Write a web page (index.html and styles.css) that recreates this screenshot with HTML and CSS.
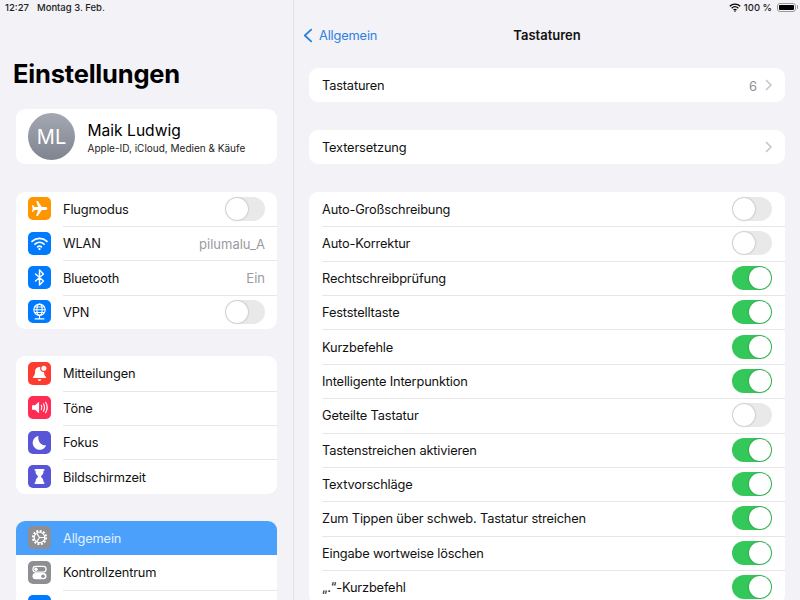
FILE: index.html
```html
<!DOCTYPE html>
<html lang="de">
<head>
<meta charset="utf-8">
<title>Tastaturen</title>
<link rel="stylesheet" href="styles.css">
</head>
<body>
<div class="app">
  <aside class="sidebar">
    <div class="status status-left"><span class="time">12:27</span><span>Montag 3. Feb.</span></div>
    <h1 class="title">Einstellungen</h1>
    <section class="card profile">
      <div class="avatar">ML</div>
      <div class="profile-text">
        <div class="profile-name">Maik Ludwig</div>
        <div class="profile-sub">Apple-ID, iCloud, Medien &amp; Käufe</div>
      </div>
    </section>
    <section class="card group">
      <div class="srow"><span class="ico orange"><svg viewBox="0 0 24 24"><path d="M21 12c0-1-1-1.700-2-1.700h-4.300L10 3.500H8.200l2.200 6.800H6.300L4.700 8.300H3.300l.9 3.700-.9 3.700h1.400l1.600-2h4.100l-2.200 6.800H10l4.700-6.800H19c1 0 2-.7 2-1.700z" fill="#fff"/></svg></span><span class="slabel">Flugmodus</span><span class="toggle"></span></div>
      <div class="srow"><span class="ico blue"><svg viewBox="0 0 24 24" fill="none" stroke="#fff" stroke-width="2" stroke-linecap="round"><path d="M3.500 9.500c4.800-4.400 12.200-4.400 17 0"/><path d="M6.800 12.800c3-2.700 7.400-2.700 10.400 0"/><path d="M9.800 15.800c1.300-1 3.100-1 4.400 0"/><circle cx="12" cy="18.400" r=".7" fill="#fff" stroke-width="1.200"/></svg></span><span class="slabel">WLAN</span><span class="value">pilumalu_A</span></div>
      <div class="srow"><span class="ico blue"><svg viewBox="0 0 24 24" fill="none" stroke="#fff" stroke-width="1.700" stroke-linejoin="round" stroke-linecap="round"><path d="M7.500 8l9 8-4.500 4.500v-17L16.500 8l-9 8"/></svg></span><span class="slabel">Bluetooth</span><span class="value">Ein</span></div>
      <div class="srow"><span class="ico blue"><svg viewBox="0 0 24 24" fill="none" stroke="#fff" stroke-width="1.300"><circle cx="12" cy="10" r="6.500"/><ellipse cx="12" cy="10" rx="3" ry="6.500"/><path d="M5.500 10h13M6.500 6.800h11M6.500 13.200h11M12 16.500v4M6.500 20.500h11"/></svg></span><span class="slabel">VPN</span><span class="toggle"></span></div>
    </section>
    <section class="card group">
      <div class="srow"><span class="ico red"><svg viewBox="0 0 24 24"><path d="M12 4.500c-3.500 0-5.200 2.600-5.200 6 0 3-1 4.300-2.300 5.500v1.200h15V16c-1.300-1.200-2.300-2.500-2.300-5.500 0-3.400-1.700-6-5.200-6z" fill="#fff"/><path d="M10 18.500h4a2 2 0 0 1-4 0z" fill="#fff"/><circle cx="17" cy="6" r="3.600" fill="#fff" stroke="#ff3b30" stroke-width="1.400"/></svg></span><span class="slabel">Mitteilungen</span></div>
      <div class="srow"><span class="ico pink"><svg viewBox="0 0 24 24"><path d="M3.500 9.500h3.300L11.500 5.500v13l-4.700-4H3.500z" fill="#fff"/><path d="M14 9.500c.9 1.500.9 3.500 0 5M16.500 7.800c1.500 2.600 1.500 5.800 0 8.400M19 6c2.200 3.700 2.200 8.300 0 12" fill="none" stroke="#fff" stroke-width="1.300" stroke-linecap="round"/></svg></span><span class="slabel">Töne</span></div>
      <div class="srow"><span class="ico indigo"><svg viewBox="0 0 24 24"><path d="M10.800 4.500a8 8 0 1 0 8.900 10.700c-5.300 1-10.200-4.400-8.900-10.700z" fill="#fff"/></svg></span><span class="slabel">Fokus</span></div>
      <div class="srow"><span class="ico indigo"><svg viewBox="0 0 24 24"><path d="M6.500 3.500h11v2h-1v1.500c0 2.500-2.500 3.700-2.900 5 .4 1.300 2.900 2.500 2.900 5v1.500h1v2h-11v-2h1V17c0-2.500 2.500-3.700 2.900-5-.4-1.300-2.900-2.500-2.900-5V5.500h-1z" fill="#fff"/></svg></span><span class="slabel">Bildschirmzeit</span></div>
    </section>
    <section class="card group">
      <div class="srow selected"><span class="ico gray"><svg viewBox="0 0 24 24" fill="none" stroke="#fff"><circle cx="12" cy="12" r="7.500" stroke-width="2.400" stroke-dasharray="2.300 1.630"/><circle cx="12" cy="12" r="6" stroke-width="1.300"/><path d="M12 12L8.800 7M12 12l-3.200 5M12 12h6" stroke-width="1.300"/></svg></span><span class="slabel">Allgemein</span></div>
      <div class="srow"><span class="ico gray"><svg viewBox="0 0 24 24"><rect x="4.500" y="5" width="15" height="6.500" rx="3.250" fill="none" stroke="#fff" stroke-width="1.400"/><circle cx="8" cy="8.250" r="1.900" fill="#fff"/><rect x="4" y="12.700" width="16" height="7" rx="3.500" fill="#fff"/><circle cx="16" cy="16.200" r="2" fill="#8e8e93"/></svg></span><span class="slabel">Kontrollzentrum</span></div>
      <div class="srow"><span class="ico blue"></span></div>
    </section>
  </aside>
  <main class="detail">
    <div class="status status-right">
      <svg class="wifi" viewBox="0 0 16 12" fill="none" stroke="#000" stroke-width="1.700"><path d="M1 4.300c4-3.600 10-3.600 14 0"/><path d="M3.500 6.900c2.600-2.300 6.400-2.300 9 0"/><path d="M6 9.300c1.200-.9 2.800-.9 4 0"/><circle cx="8" cy="10.800" r=".5" fill="#000" stroke-width="1"/></svg>
      <span>100 %</span>
      <span class="battery"><span class="battery-fill"></span></span>
    </div>
    <header class="nav">
      <div class="back"><svg class="back-icon" viewBox="0 0 11 16" fill="none" stroke="#2f7fdc" stroke-width="2" stroke-linecap="round" stroke-linejoin="round"><path d="M9 1.500L2 8l7 6.500"/></svg><span>Allgemein</span></div>
      <div class="nav-title">Tastaturen</div>
    </header>
    <section class="card dgroup first">
      <div class="drow"><span class="dlabel">Tastaturen</span><span class="dvalue">6</span><svg class="chev" viewBox="0 0 7 12" fill="none" stroke="#c4c4c7" stroke-width="1.500"><path d="M1 1l5 5-5 5"/></svg></div>
    </section>
    <section class="card dgroup">
      <div class="drow"><span class="dlabel">Textersetzung</span><svg class="chev" viewBox="0 0 7 12" fill="none" stroke="#c4c4c7" stroke-width="1.500"><path d="M1 1l5 5-5 5"/></svg></div>
    </section>
    <section class="card dgroup">
      <div class="drow"><span class="dlabel">Auto-Großschreibung</span><span class="toggle"></span></div>
      <div class="drow"><span class="dlabel">Auto-Korrektur</span><span class="toggle"></span></div>
      <div class="drow"><span class="dlabel">Rechtschreibprüfung</span><span class="toggle on"></span></div>
      <div class="drow"><span class="dlabel">Feststelltaste</span><span class="toggle on"></span></div>
      <div class="drow"><span class="dlabel">Kurzbefehle</span><span class="toggle on"></span></div>
      <div class="drow"><span class="dlabel">Intelligente Interpunktion</span><span class="toggle on"></span></div>
      <div class="drow"><span class="dlabel">Geteilte Tastatur</span><span class="toggle"></span></div>
      <div class="drow"><span class="dlabel">Tastenstreichen aktivieren</span><span class="toggle on"></span></div>
      <div class="drow"><span class="dlabel">Textvorschläge</span><span class="toggle on"></span></div>
      <div class="drow"><span class="dlabel">Zum Tippen über schweb. Tastatur streichen</span><span class="toggle on"></span></div>
      <div class="drow"><span class="dlabel">Eingabe wortweise löschen</span><span class="toggle on"></span></div>
      <div class="drow"><span class="dlabel">„.“-Kurzbefehl</span><span class="toggle on"></span></div>
    </section>
  </main>
</div>
</body>
</html>
```
FILE: styles.css
```css
* { box-sizing: border-box; }
html, body { margin: 0; height: 600px; overflow: hidden; }
body { background: #f2f2f7; color: #111; font-family: Inter, "Liberation Sans", sans-serif; }
.app { display: flex; height: 600px; overflow: hidden; }
.sidebar { width: 294px; flex: none; padding: 0 16px; border-right: 1px solid #e1e1e6; }
.detail { flex: 1; padding: 0 15px 0 15px; min-width: 0; }
.status { height: 14px; display: flex; align-items: center; font-size: 9.500px; font-weight: 500; color: #222; }
.status-left { margin-left: -11px; gap: 8px; }
.status-right { justify-content: flex-end; gap: 3px; margin-right: -11px; }
.wifi { width: 12px; height: 9px; }
.battery { width: 19px; height: 9px; margin-left: 2px; border: 1px solid #9a9a9e; border-radius: 3px; padding: 1px; display: flex; position: relative; }
.battery::after { content: ""; position: absolute; right: -3px; top: 1.500px; width: 1.500px; height: 4px; background: #9a9a9e; border-radius: 0 1px 1px 0; }
.battery-fill { flex: 1; background: #000; border-radius: 1px; }
.title { margin: 45px 0 0 -3px; height: 50px; font-size: 25.500px; line-height: 30px; font-weight: 700; color: #000; letter-spacing: -0.200px; }
.card { background: #fff; border-radius: 9px; overflow: hidden; }
.profile { height: 55px; display: flex; align-items: center; padding-left: 12px; gap: 12.500px; }
.avatar { width: 47px; height: 47px; border-radius: 50%; background: linear-gradient(#a4a8b3, #7f8490); color: #fff; display: flex; align-items: center; justify-content: center; font-size: 20px; font-weight: 400; }
.profile-name { font-size: 15.600px; line-height: 20px; color: #000; padding-top: 2px; }
.profile-sub { font-size: 10px; line-height: 14px; color: #222; }
.group { margin-top: 27.600px; }
.group + .group { margin-top: 27px; }
.srow { height: 34.400px; display: flex; align-items: center; padding-left: 12px; padding-right: 12px; font-size: 12.800px; letter-spacing: -0.160px; position: relative; }
.srow + .srow::before, .drow + .drow::before { content: ""; position: absolute; right: 0; top: 0; height: 1px; background: #e6e6e9; }
.srow + .srow::before { left: 47px; }
.drow + .drow::before { left: 13px; }
.slabel { flex: 1; margin-left: 12px; color: #111; padding-top: 1px; }
.value { color: #9a9a9f; font-size: 13px; letter-spacing: 0; padding-top: 1px; }
.ico { width: 23px; height: 23px; flex: none; border-radius: 5px; display: flex; align-items: center; justify-content: center; }
.ico svg { width: 21px; height: 21px; }
.orange { background: #ff9500; }
.blue { background: #007aff; }
.red { background: #ff3b30; }
.pink { background: #ff2d55; }
.indigo { background: #5856d6; }
.gray { background: #8e8e93; }
.selected { background: #4ba0fb; }
.selected .slabel { color: #e3f0ff; }
.selected + .srow::before { display: none; }
.toggle { width: 40px; height: 24px; flex: none; border-radius: 12px; background: #e9e9ea; padding: 1px; display: flex; }
.toggle::before { content: ""; width: 22px; height: 22px; border-radius: 50%; background: #fff; box-shadow: 0 0 2px rgba(0,0,0,.35); }
.toggle.on { background: #34c759; justify-content: flex-end; }
.nav { height: 54px; padding-bottom: 12px; display: flex; align-items: center; position: relative; margin-left: -6px; }
.back { display: flex; align-items: center; gap: 6px; color: #2f7fdc; font-size: 12.800px; letter-spacing: -0.160px; }
.back-icon { width: 10px; height: 15px; }
.nav-title { position: absolute; left: 0; right: 0; text-align: center; font-size: 13px; font-weight: 600; color: #111; padding-left: 6px; }
.dgroup { margin-top: 27.500px; }
.dgroup.first { margin-top: 0; }
.drow { height: 34.400px; display: flex; align-items: center; padding: 0 13px; font-size: 12.800px; letter-spacing: -0.160px; position: relative; }
.dlabel { flex: 1; color: #111; padding-top: 1px; }
.dvalue { color: #8e8e93; font-size: 13px; letter-spacing: 0; margin-right: 8px; padding-top: 1px; }
.chev { width: 7px; height: 12px; }
```
